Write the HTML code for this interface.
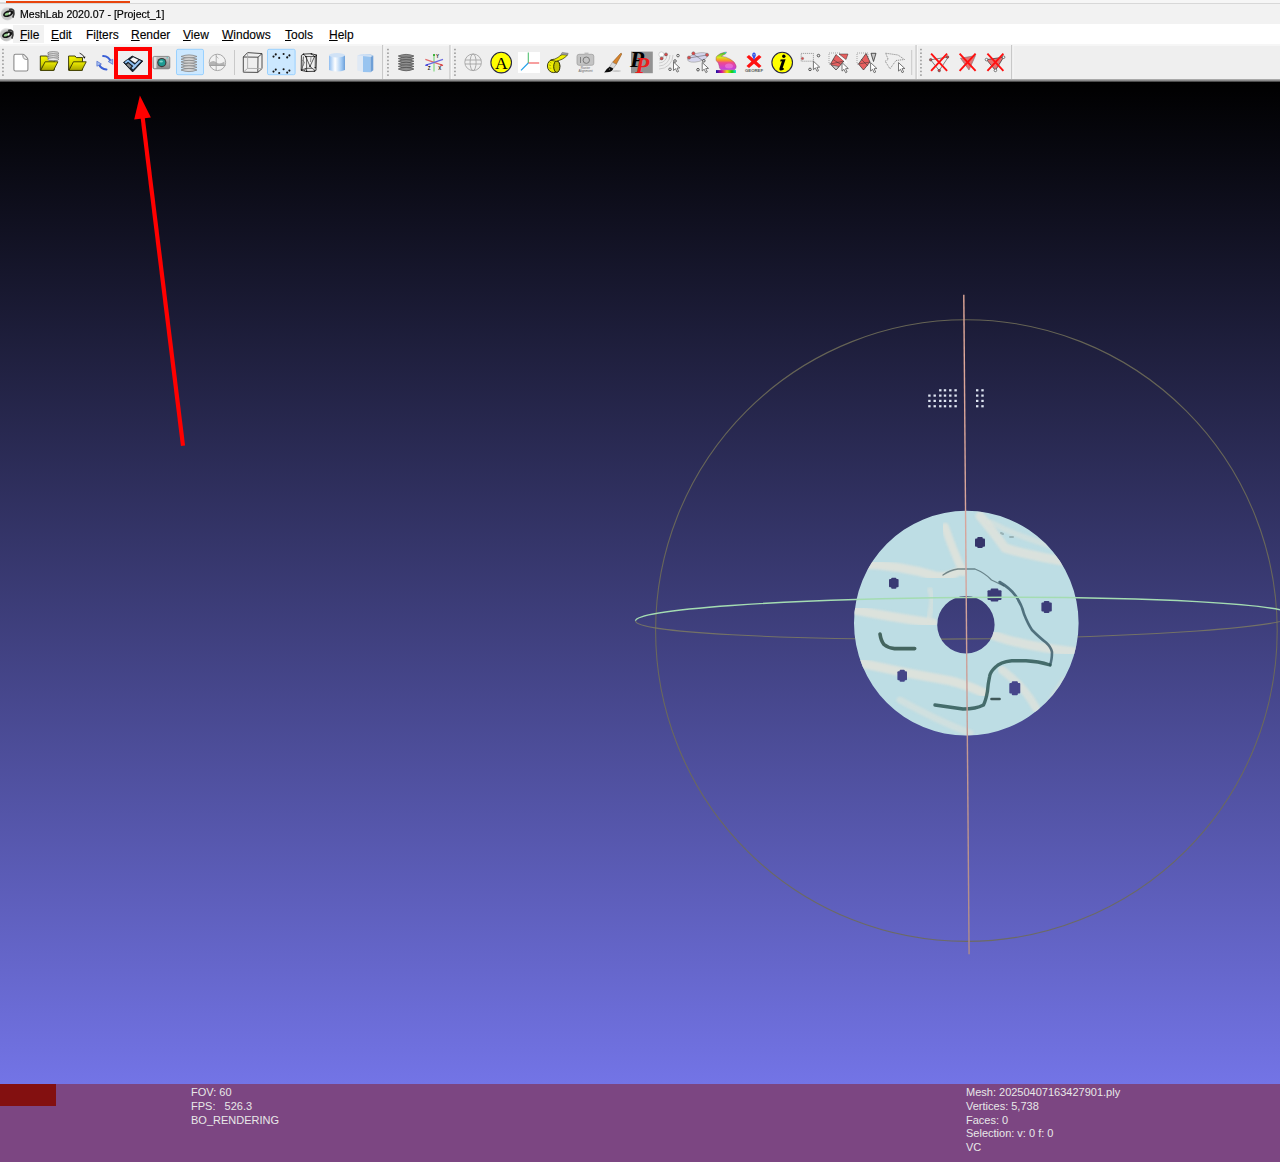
<!DOCTYPE html>
<html><head><meta charset="utf-8">
<style>
*{margin:0;padding:0;box-sizing:border-box}
html,body{width:1280px;height:1162px;overflow:hidden;background:#f0f0f0;font-family:"Liberation Sans",sans-serif}
#title{position:absolute;left:0;top:0;width:1280px;height:24px;background:linear-gradient(#f6f6f6 0,#f6f6f6 3px,#f2f2f2 4px,#f2f2f2 100%)}
#prog{position:absolute;left:6px;top:1px;width:124px;height:3px;background:#e8440c}
#topline{position:absolute;left:0;top:3px;width:1280px;height:1px;background:#d8d8d8}
#ttext{position:absolute;left:19.5px;top:7.7px;font-size:11px;color:#000;-webkit-text-stroke:0.2px #000;white-space:nowrap;transform-origin:0 0;transform:scaleX(0.96)}
#menu{position:absolute;left:0;top:24px;width:1280px;height:20px;background:#fff}
.mi{position:absolute;top:3px;font-size:12px;color:#000;white-space:nowrap;-webkit-text-stroke:0.12px #000}
.mi u{text-decoration:underline}
#filehl{position:absolute;left:13px;top:25px;width:31px;height:18px;background:#f2f2f2}
#tb{position:absolute;left:0;top:44px;width:1280px;height:36px;background:linear-gradient(#f6f6f6 0,#f6f6f6 2px,#efefef 2.5px,#efefef 100%)}
#view{position:absolute;left:0;top:82px;width:1280px;height:1080px;background:linear-gradient(to bottom,#000 0px,rgb(115,116,230) 1002px,rgb(115,116,230) 1080px)}
#shadow{position:absolute;left:0;top:79px;width:1280px;height:3px;background:linear-gradient(#b4b4b4,#9a9a9a 40%,#303030)}
#bar{position:absolute;left:0;top:1084px;width:1280px;height:78px;background:#7c4682}
#redbox{position:absolute;left:0;top:1084px;width:56px;height:22px;background:#831010}
.info{position:absolute;font-size:11px;line-height:13.6px;color:#e8e8e8;white-space:pre;margin-top:-0.6px}
svg{position:absolute;left:0;top:0}
</style></head><body>
<div id="title"></div>
<div id="prog"></div><div style="position:absolute;left:0;top:1.5px;width:6px;height:2px;background:#dcdcdc"></div>
<div id="topline"></div>
<svg width="0" height="0" style="position:absolute"><defs><radialGradient id="eyeg" cx="0.45" cy="0.55" r="0.55"><stop offset="0" stop-color="#b0b0b0"/><stop offset="0.7" stop-color="#c8c8c8"/><stop offset="1" stop-color="#dedede" stop-opacity="0.3"/></radialGradient></defs></svg><svg width="18" height="18" style="position:absolute;left:0.3px;top:5.2px">
<ellipse cx="7.6" cy="8.6" rx="6.9" ry="6.9" fill="url(#eyeg)"/>
<path d="M9,4.6 Q12,3.2 13.6,5.5 Q14.6,8.5 12.8,12.6" fill="none" stroke="#3a3a3a" stroke-width="1.7"/>
<ellipse cx="8.2" cy="8.6" rx="5.3" ry="3" transform="rotate(-20 8.2 8.6)" fill="#111"/>
<ellipse cx="7.2" cy="9" rx="2.6" ry="1.3" transform="rotate(-20 7.2 9)" fill="#9ad292"/>
<ellipse cx="9.7" cy="8.2" rx="0.9" ry="1.4" transform="rotate(30 9.7 8.2)" fill="#f4f4f4"/>
</svg><div id="ttext">MeshLab 2020.07 - [Project_1]</div>
<div id="menu"></div>
<div id="filehl"></div>
<svg width="18" height="18" style="position:absolute;left:-1.2px;top:26.2px">
<ellipse cx="7.6" cy="8.6" rx="6.9" ry="6.9" fill="url(#eyeg)"/>
<path d="M9,4.6 Q12,3.2 13.6,5.5 Q14.6,8.5 12.8,12.6" fill="none" stroke="#3a3a3a" stroke-width="1.7"/>
<ellipse cx="8.2" cy="8.6" rx="5.3" ry="3" transform="rotate(-20 8.2 8.6)" fill="#111"/>
<ellipse cx="7.2" cy="9" rx="2.6" ry="1.3" transform="rotate(-20 7.2 9)" fill="#9ad292"/>
<ellipse cx="9.7" cy="8.2" rx="0.9" ry="1.4" transform="rotate(30 9.7 8.2)" fill="#f4f4f4"/>
</svg><div class="mi" style="left:20px;top:28px"><u>F</u>ile</div>
<div class="mi" style="left:51px;top:28px"><u>E</u>dit</div>
<div class="mi" style="left:86px;top:28px">Fi<u>l</u>ters</div>
<div class="mi" style="left:131px;top:28px"><u>R</u>ender</div>
<div class="mi" style="left:183px;top:28px"><u>V</u>iew</div>
<div class="mi" style="left:222px;top:28px"><u>W</u>indows</div>
<div class="mi" style="left:285px;top:28px"><u>T</u>ools</div>
<div class="mi" style="left:329px;top:28px"><u>H</u>elp</div>
<div id="tb"></div>
<svg id="tbsvg" width="1280" height="82" style="position:absolute;left:0;top:0"><rect x="2.1" y="48.8" width="1.7" height="1.5" fill="#9c9c9c"/><rect x="2.1" y="52.449999999999996" width="1.7" height="1.5" fill="#9c9c9c"/><rect x="2.1" y="56.099999999999994" width="1.7" height="1.5" fill="#9c9c9c"/><rect x="2.1" y="59.75" width="1.7" height="1.5" fill="#9c9c9c"/><rect x="2.1" y="63.39999999999999" width="1.7" height="1.5" fill="#9c9c9c"/><rect x="2.1" y="67.05" width="1.7" height="1.5" fill="#9c9c9c"/><rect x="2.1" y="70.7" width="1.7" height="1.5" fill="#9c9c9c"/><rect x="2.1" y="74.35" width="1.7" height="1.5" fill="#9c9c9c"/><path d="M15.5,54.3 h6.9 q1.5,0 2.6,1.2 l1.9,2.1 q1,1.1 1,2.4 v9.4 q0,1.6 -1.6,1.6 h-10.8 q-1.6,0 -1.6,-1.6 v-13.5 q0,-1.6 1.6,-1.6 Z" fill="#fff" stroke="#8a8a8a" stroke-width="1.1"/><path d="M22.6,54.6 q0.4,3.6 1.6,4.3 q1.2,0.7 3.5,0.6" fill="#e8e8e8" stroke="#8a8a8a" stroke-width="0.9"/><defs><linearGradient id="fback" x1="0" y1="0" x2="0.3" y2="1"><stop offset="0" stop-color="#ffff00"/><stop offset="0.6" stop-color="#d0d000"/><stop offset="1" stop-color="#404000"/></linearGradient><linearGradient id="ffront" x1="0" y1="0" x2="0" y2="1"><stop offset="0" stop-color="#f0f000"/><stop offset="1" stop-color="#a8a400"/></linearGradient></defs><path d="M40.3,56 h6.5 l1.2,1.6 h6.2 v12.6 h-13.9 Z" fill="url(#fback)" stroke="#2a2a00" stroke-width="0.9"/><path d="M40.699999999999996,70.4 l4.4,-8.6 h12.8 l-4.4,8.6 Z" fill="url(#ffront)" stroke="#3a3a00" stroke-width="0.9" stroke-linejoin="round"/><ellipse cx="53.2" cy="53.2" rx="5.6" ry="1.5" fill="#eaeaea" stroke="#6e6e6e" stroke-width="0.8"/><ellipse cx="53.2" cy="55.2" rx="5.6" ry="1.5" fill="#eaeaea" stroke="#6e6e6e" stroke-width="0.8"/><ellipse cx="53.2" cy="57.2" rx="5.6" ry="1.5" fill="#eaeaea" stroke="#6e6e6e" stroke-width="0.8"/><ellipse cx="53.2" cy="59.2" rx="5.6" ry="1.5" fill="#eaeaea" stroke="#6e6e6e" stroke-width="0.8"/><path d="M68.6,56 h6.5 l1.2,1.6 h6.2 v12.6 h-13.9 Z" fill="url(#fback)" stroke="#2a2a00" stroke-width="0.9"/><path d="M69.0,70.4 l4.4,-8.6 h12.8 l-4.4,8.6 Z" fill="url(#ffront)" stroke="#3a3a00" stroke-width="0.9" stroke-linejoin="round"/><path d="M79.6,53.1 q3.6,1.4 4.6,4.2" fill="none" stroke="#222" stroke-width="0.9"/><path d="M83,57 l1.8,1.8 l0.6,-2.4 Z" fill="#111"/><path d="M103.2,56 q5.5,0.2 7.6,5.6" fill="none" stroke="#3a5fd6" stroke-width="2.2" stroke-linecap="round"/><path d="M108.2,61.5 l4.5,2.8 l0,-5 Z" fill="#a9c0ee" stroke="#4a6ad0" stroke-width="0.7"/><path d="M106.4,69.5 q-5.5,-0.2 -7.6,-5.6" fill="none" stroke="#3a5fd6" stroke-width="2.2" stroke-linecap="round"/><path d="M101.4,64 l-4.5,-2.8 l0,5 Z" fill="#a9c0ee" stroke="#4a6ad0" stroke-width="0.7"/><rect x="116" y="49" width="34" height="28" fill="none" stroke="#ff0000" stroke-width="4"/><path d="M123.5,62.4 L132.2,56.1 L142.8,61.1 L132.6,71.9 Z" fill="#16202c" stroke="#101820" stroke-width="0.9" stroke-linejoin="round"/><path d="M124.47,62.17 L127.80,59.72 L129.26,60.84 L125.86,63.54 Z" fill="#8cc0f4"/><path d="M126.66,60.56 L127.97,59.60 L136.51,65.98 L135.01,67.53 Z" fill="#8cc0f4"/><path d="M131.42,67.90 L139.34,60.18 L141.24,61.12 L133.10,69.50 Z" fill="#9cc8f6"/><path d="M130.12,59.57 L133.15,57.22 L138.40,59.85 L135.12,62.97 Z" fill="#f8f8f8"/><path d="M126.50,64.68 L128.24,63.25 L131.64,66.28 L129.81,68.02 Z" fill="#8a8a8a"/><defs><linearGradient id="camb" x1="0" y1="0" x2="0" y2="1"><stop offset="0" stop-color="#c8c8c8"/><stop offset="1" stop-color="#8a8a8a"/></linearGradient></defs><rect x="153" y="56.4" width="16.8" height="12.4" rx="1.5" fill="url(#camb)" stroke="#6a6a6a" stroke-width="0.7"/><rect x="153.8" y="57.2" width="2.6" height="11" fill="#e4e4e4"/><circle cx="161.8" cy="62.6" r="4.6" fill="#3a3a3a"/><circle cx="161.8" cy="62.6" r="3.5" fill="#1d9a92"/><ellipse cx="161.2" cy="61.4" rx="1.8" ry="1" fill="#7fd6cc"/><rect x="166.5" y="57.2" width="1.6" height="1.2" fill="#5fc8c8"/><rect x="176.5" y="49.3" width="27" height="25.4" rx="1.5" fill="#cce8ff" stroke="#99d1ff" stroke-width="1"/><path d="M181,56.5 q8,-3.2 16,0 q-8,3.2 -16,0 Z" fill="#d2d2d2" stroke="#858585" stroke-width="0.8"/><path d="M181,59.2 q8,-3.2 16,0 q-8,3.2 -16,0 Z" fill="#d2d2d2" stroke="#858585" stroke-width="0.8"/><path d="M181,61.9 q8,-3.2 16,0 q-8,3.2 -16,0 Z" fill="#d2d2d2" stroke="#858585" stroke-width="0.8"/><path d="M181,64.6 q8,-3.2 16,0 q-8,3.2 -16,0 Z" fill="#d2d2d2" stroke="#858585" stroke-width="0.8"/><path d="M181,67.3 q8,-3.2 16,0 q-8,3.2 -16,0 Z" fill="#d2d2d2" stroke="#858585" stroke-width="0.8"/><path d="M181,70 q8,-3.2 16,0 q-8,3.2 -16,0 Z" fill="#d2d2d2" stroke="#858585" stroke-width="0.8"/><circle cx="217.4" cy="62.4" r="8.2" fill="#f2f2f2" stroke="#a8a8a8" stroke-width="1"/><path d="M209.5,62.5 q4,-3 7,0 q3,2.5 8,-1 v4.5 h-15 Z" fill="#b4b4b4"/><line x1="209.3" y1="65.4" x2="225.5" y2="65.4" stroke="#9a9a9a" stroke-width="0.8"/><line x1="216.2" y1="54.5" x2="216.2" y2="70.3" stroke="#a0a0a0" stroke-width="0.8"/><path d="M216,56 l2.5,2.4" stroke="#999" stroke-width="0.6"/><rect x="234" y="50" width="1" height="25" fill="#c9c9c9"/><g fill="none" stroke="#3a3a3a" stroke-width="0.9" stroke-linejoin="round"><path d="M243.3,57 L247.6,52.6 L262,53.6 L262,68.6 L257.8,72.4 L243.3,72.2 Z"/><path d="M243.3,57 L258,57.2 L262,53.6 M258,57.2 L257.8,72.4"/><path d="M247.6,52.6 L247.6,68.4 L262,68.6 M247.6,68.4 L243.3,72.2" stroke="#aaa"/></g><rect x="267.5" y="49.3" width="27.600000000000023" height="25.4" rx="1.5" fill="#cce8ff" stroke="#99d1ff" stroke-width="1"/><circle cx="273.5" cy="56.6" r="1.05" fill="#151515"/><circle cx="275.75" cy="54.4" r="1.05" fill="#151515"/><circle cx="279.2" cy="57.9" r="1.05" fill="#151515"/><circle cx="283.6" cy="54" r="1.05" fill="#151515"/><circle cx="287.2" cy="57.4" r="1.05" fill="#151515"/><circle cx="289.4" cy="55.4" r="1.05" fill="#151515"/><circle cx="273.5" cy="71.6" r="1.05" fill="#151515"/><circle cx="275.75" cy="69.6" r="1.05" fill="#151515"/><circle cx="279.2" cy="73" r="1.05" fill="#151515"/><circle cx="283.6" cy="69.2" r="1.05" fill="#151515"/><circle cx="287.2" cy="72.6" r="1.05" fill="#151515"/><circle cx="289.4" cy="70.6" r="1.05" fill="#151515"/><g fill="none" stroke="#1e1e1e" stroke-width="0.85" stroke-linejoin="round"><path d="M301.4,55.4 L303.5,54.1 L311.3,53.7 L316.5,55 L316,70.4 L314.4,71.3 L306.6,71.5 L301.2,70.4 Z"/><path d="M303.5,54.1 L305.7,56.5 L314.6,56.5 L311.3,53.7 M305.7,56.5 L310,66.3 L314.6,56.5 M306.6,56.5 L306.6,71.5 M303.4,56.5 L302.9,65 L302,69.5 M301.5,70 L306.4,68.3 L312,68.3 L314.7,70 M315.3,56 L315.2,68 M310,66.3 L312,68.3 M306,68.3 L304,71" stroke-width="0.7"/><path d="M302,60 L304.5,62 L303,66 M311,56.8 L310.5,62" stroke="#777" stroke-width="0.8"/></g><circle cx="303.5" cy="54.3" r="0.75" fill="#111"/><circle cx="311.3" cy="54" r="0.75" fill="#111"/><circle cx="316.2" cy="55.3" r="0.75" fill="#111"/><circle cx="305.7" cy="56.6" r="0.75" fill="#111"/><circle cx="314.6" cy="56.6" r="0.75" fill="#111"/><circle cx="310" cy="66.3" r="0.75" fill="#111"/><circle cx="301.6" cy="70" r="0.75" fill="#111"/><circle cx="306.6" cy="71.3" r="0.75" fill="#111"/><circle cx="314.4" cy="71" r="0.75" fill="#111"/><circle cx="315.2" cy="67.8" r="0.75" fill="#111"/><defs><linearGradient id="cyl" x1="0" x2="1"><stop offset="0" stop-color="#8fbdf0"/><stop offset="0.38" stop-color="#ffffff"/><stop offset="0.8" stop-color="#9cc6f2"/><stop offset="1" stop-color="#6c9fd8"/></linearGradient></defs><path d="M329,55.5 Q337,52 345,55.5 L345,70 Q337,73.2 329,70 Z" fill="url(#cyl)"/><ellipse cx="337" cy="55.3" rx="8" ry="2.2" fill="#d0e2f6"/><path d="M357.3,55.5 L363,54 L363,72 L357.3,70.5 Z" fill="#dfe9f5"/><path d="M363,54 L370.6,54.6 L370.6,72.3 L363,72 Z" fill="#98c4f0"/><path d="M370.6,54.6 L373.3,55.8 L373.3,70.3 L370.6,72.3 Z" fill="#6e9fd6"/><path d="M357.3,55.5 Q365,52.5 373.3,55.8 L370.6,57 Q365,56 357.3,55.5 Z" fill="#cfe0f4"/><rect x="382.1" y="45" width="1.3" height="34" fill="#c4c4c4"/><rect x="383.40000000000003" y="45" width="1" height="34" fill="#fbfbfb"/><rect x="387.1" y="48.8" width="1.7" height="1.5" fill="#9c9c9c"/><rect x="387.1" y="52.449999999999996" width="1.7" height="1.5" fill="#9c9c9c"/><rect x="387.1" y="56.099999999999994" width="1.7" height="1.5" fill="#9c9c9c"/><rect x="387.1" y="59.75" width="1.7" height="1.5" fill="#9c9c9c"/><rect x="387.1" y="63.39999999999999" width="1.7" height="1.5" fill="#9c9c9c"/><rect x="387.1" y="67.05" width="1.7" height="1.5" fill="#9c9c9c"/><rect x="387.1" y="70.7" width="1.7" height="1.5" fill="#9c9c9c"/><rect x="387.1" y="74.35" width="1.7" height="1.5" fill="#9c9c9c"/><path d="M398.3,56 q7.8,-3.2 15.6,0 q-7.8,3.5 -15.6,0 Z" fill="#8e8e8e" stroke="#505050" stroke-width="0.8"/><path d="M398.3,58.6 q7.8,-3.2 15.6,0 q-7.8,3.5 -15.6,0 Z" fill="#8e8e8e" stroke="#505050" stroke-width="0.8"/><path d="M398.3,61.2 q7.8,-3.2 15.6,0 q-7.8,3.5 -15.6,0 Z" fill="#8e8e8e" stroke="#505050" stroke-width="0.8"/><path d="M398.3,63.8 q7.8,-3.2 15.6,0 q-7.8,3.5 -15.6,0 Z" fill="#8e8e8e" stroke="#505050" stroke-width="0.8"/><path d="M398.3,66.4 q7.8,-3.2 15.6,0 q-7.8,3.5 -15.6,0 Z" fill="#8e8e8e" stroke="#505050" stroke-width="0.8"/><path d="M398.3,69 q7.8,-3.2 15.6,0 q-7.8,3.5 -15.6,0 Z" fill="#8e8e8e" stroke="#505050" stroke-width="0.8"/><line x1="434" y1="54.5" x2="434" y2="71.5" stroke="#80d880" stroke-width="1.2"/><circle cx="434" cy="55" r="1" fill="#16a016"/><line x1="425.3" y1="59.4" x2="443" y2="65.4" stroke="#e06a6a" stroke-width="1.2"/><line x1="425.3" y1="65.4" x2="443" y2="59.4" stroke="#6a6ae0" stroke-width="1.2"/><path d="M425,65.6 l2.6,-1.6 l0.4,1.8 Z" fill="#2020d0"/><path d="M443.3,65.6 l-2.6,-1.6 l-0.4,1.8 Z" fill="#d02020"/><text x="436" y="57.5" font-size="4.5" font-weight="bold" fill="#222">Y</text><text x="427.8" y="69.5" font-size="4.5" font-weight="bold" fill="#222">Z</text><text x="438.3" y="69.5" font-size="4.5" font-weight="bold" fill="#222">X</text><rect x="449.4" y="45" width="1.3" height="34" fill="#c4c4c4"/><rect x="450.7" y="45" width="1" height="34" fill="#fbfbfb"/><rect x="454.1" y="48.8" width="1.7" height="1.5" fill="#9c9c9c"/><rect x="454.1" y="52.449999999999996" width="1.7" height="1.5" fill="#9c9c9c"/><rect x="454.1" y="56.099999999999994" width="1.7" height="1.5" fill="#9c9c9c"/><rect x="454.1" y="59.75" width="1.7" height="1.5" fill="#9c9c9c"/><rect x="454.1" y="63.39999999999999" width="1.7" height="1.5" fill="#9c9c9c"/><rect x="454.1" y="67.05" width="1.7" height="1.5" fill="#9c9c9c"/><rect x="454.1" y="70.7" width="1.7" height="1.5" fill="#9c9c9c"/><rect x="454.1" y="74.35" width="1.7" height="1.5" fill="#9c9c9c"/><g fill="none" stroke="#a4a4a4" stroke-width="0.9"><circle cx="473.1" cy="62.3" r="8.3"/><ellipse cx="473.1" cy="62.3" rx="3" ry="8.3"/><path d="M465,60 H481.2 M465,64 H481.2"/></g><circle cx="501.2" cy="62.6" r="10.3" fill="#ffff00" stroke="#262640" stroke-width="1.1"/><text x="501.3" y="68.9" font-family="Liberation Serif" font-size="17.5" text-anchor="middle" fill="#000">A</text><rect x="518" y="52" width="22" height="21" fill="#fff"/><line x1="528.3" y1="52.6" x2="528.3" y2="63" stroke="#50c070" stroke-width="1.1"/><line x1="528.3" y1="63" x2="539.2" y2="63" stroke="#f05050" stroke-width="1.1"/><line x1="528.3" y1="63" x2="521" y2="70.4" stroke="#20a0e8" stroke-width="1.2"/><ellipse cx="553.6" cy="66" rx="6.2" ry="6.6" fill="#eeee00" stroke="#2a2a10" stroke-width="0.9"/><path d="M549.5,62 L551.5,63 M549,65 L551,65.6 M549.2,68 L551.3,68.4" stroke="#8a8a00" stroke-width="0.6"/><ellipse cx="556.8" cy="66.6" rx="3.1" ry="5.8" fill="#c4c400" stroke="#1a1a00" stroke-width="0.9"/><path d="M550.5,60.2 Q555.5,59.2 558,57.4 Q560,55.6 562,54.6 L567.6,54.9 Q565.2,57.6 562.2,59.2 Q559,60.6 556,61.3 Z" fill="#f0f000" stroke="#2a2a10" stroke-width="0.7"/><path d="M560.8,54.6 L562.2,52.4 L568.2,53.3 L567.6,55 Z" fill="#a0a0a0" stroke="#555" stroke-width="0.4"/><rect x="577" y="54.3" width="16.8" height="11" rx="2" fill="#c4c4c4" stroke="#9a9a9a" stroke-width="0.7"/><rect x="584.5" y="52.6" width="4" height="2" fill="#bbb"/><circle cx="586.3" cy="60.2" r="3.2" fill="none" stroke="#7a7a7a" stroke-width="1"/><rect x="580" y="57" width="0.9" height="6" fill="#7a7a7a"/><text x="585.5" y="68.8" font-size="3.2" text-anchor="middle" fill="#666">Raster</text><text x="585.5" y="72.3" font-size="3.2" text-anchor="middle" fill="#666">Alignment</text><ellipse cx="616.5" cy="71" rx="4.5" ry="0.8" fill="#bdbdbd"/><path d="M612.5,62.3 L620.4,53.6 Q621.6,52.8 621.8,54 L616.2,64.4 Z" fill="#d8842c" stroke="#7a4a14" stroke-width="0.5"/><path d="M612.4,62.3 L616.3,64.4 L613.2,68.6 L609.6,66.8 Z" fill="#dcdcdc" stroke="#8a8a8a" stroke-width="0.5"/><path d="M609.6,66.8 L613.2,68.6 Q612.6,71.4 609.2,71.9 L604.2,72.4 Q606,69 609.6,66.8 Z" fill="#0a0a0a"/><circle cx="609.5" cy="69.2" r="0.6" fill="#777"/><rect x="631" y="51.6" width="21.8" height="21.6" fill="#929292"/><text x="630" y="67" font-family="Liberation Serif" font-style="italic" font-weight="bold" font-size="23" fill="#000">P</text><text x="635.2" y="73" font-family="Liberation Serif" font-style="italic" font-weight="bold" font-size="23" fill="#ee1c1c">P</text><g fill="none" stroke="#c8c8c8" stroke-width="0.9"><path d="M659,63 a8,8 0 0,0 8,-8"/><path d="M659,66 a11,11 0 0,0 11,-11"/><path d="M659,69 a14,14 0 0,0 14,-14"/><path d="M659,60 a5,5 0 0,0 5,-5"/></g><circle cx="661.4" cy="54.5" r="2.6" fill="#fff" stroke="#bbb" stroke-width="0.6"/><circle cx="666" cy="54.4" r="1.5" fill="#e04848" stroke="#555" stroke-width="0.5"/><circle cx="661.6" cy="58.4" r="1.5" fill="#e04848" stroke="#555" stroke-width="0.5"/><circle cx="678" cy="55.6" r="1.3" fill="none" stroke="#555" stroke-width="0.9"/><circle cx="675" cy="61" r="1.3" fill="none" stroke="#555" stroke-width="0.9"/><circle cx="670" cy="69.3" r="1.3" fill="none" stroke="#555" stroke-width="0.9"/><path d="M673.5,62 l0,8.5 l2,-1.8 l1.6,3.4 l1.5,-0.7 l-1.6,-3.3 l2.8,-0.2 Z" fill="#fff" stroke="#555" stroke-width="0.8" stroke-linejoin="round"/><ellipse cx="697.8" cy="57.4" rx="10.5" ry="4.2" transform="rotate(-14 697.8 57.4)" fill="#d4d4ec" stroke="#aaa" stroke-width="0.7"/><path d="M689,58 L707,55 M693,54 L702,60" stroke="#555" stroke-width="0.5"/><circle cx="689" cy="57.6" r="1.6" fill="#e04848" stroke="#666" stroke-width="0.5"/><circle cx="693.4" cy="53.4" r="1.6" fill="#e04848" stroke="#666" stroke-width="0.5"/><circle cx="707" cy="54.8" r="1.6" fill="#e04848" stroke="#666" stroke-width="0.5"/><circle cx="703.8" cy="60.8" r="1.3" fill="none" stroke="#444" stroke-width="0.9"/><circle cx="698" cy="69.7" r="1.3" fill="none" stroke="#444" stroke-width="0.9"/><path d="M702.2,62.5 l0,8.5 l2,-1.8 l1.6,3.4 l1.5,-0.7 l-1.6,-3.3 l2.8,-0.2 Z" fill="#fff" stroke="#555" stroke-width="0.8" stroke-linejoin="round"/><defs><linearGradient id="rb" x1="0" x2="1"><stop offset="0" stop-color="#1010a0"/><stop offset="0.3" stop-color="#e010a0"/><stop offset="0.55" stop-color="#f0e000"/><stop offset="0.8" stop-color="#10d010"/><stop offset="1" stop-color="#10e0e0"/></linearGradient><linearGradient id="bb" x1="0" y1="0" x2="0" y2="1"><stop offset="0" stop-color="#20c030"/><stop offset="0.3" stop-color="#d8e820"/><stop offset="0.45" stop-color="#f8a020"/><stop offset="0.6" stop-color="#f04890"/><stop offset="1" stop-color="#c040e8"/></linearGradient></defs><rect x="716" y="70.1" width="20" height="2.9" fill="url(#rb)"/><path d="M716,59.5 Q715.5,56.5 717.5,55.5 L720.5,53.5 Q724,52.2 726.5,52 L725.5,54 Q723,55 721.5,56.4 Q726,56.5 730,59 Q735,61.5 736.2,66 Q736.5,68.5 734.5,69.8 L721,69.8 Q719,68.5 719.2,66 Q718.5,63 717.5,62 Q716,61 716,59.5 Z" fill="url(#bb)" stroke="#8a3060" stroke-width="0.35"/><ellipse cx="729" cy="66" rx="4" ry="2.5" fill="#f080e0" opacity="0.6"/><path d="M724,52.8 L726.5,52 L725.6,53.8 Z" fill="#30e0e0"/><path d="M746.5,57 L749,55 L754,59.2 L759,55 L761.5,57 L756.6,61.6 L761.5,66 L759,68 L754,63.8 L749,68 L746.5,66 L751.4,61.6 Z" fill="#ff1010"/><path d="M754,60.5 L752.2,55.6 Q752.2,52.6 754,52.6 Q755.8,52.6 755.8,55.6 Z" fill="#3050f0"/><circle cx="754" cy="54.8" r="0.8" fill="#9ab"/><text x="754" y="72.3" font-size="4.3" font-weight="bold" text-anchor="middle" fill="#5a5a5a">GEOREF</text><circle cx="782.2" cy="62.6" r="10.3" fill="#ffff00" stroke="#262640" stroke-width="1.1"/><circle cx="783.8" cy="56.3" r="1.7" fill="#000"/><path d="M780.6,59.6 L785.6,59.2 L782.8,67.6 Q782.6,68.6 783.8,68.2 L784.2,69.2 Q781.2,71 779.8,70.2 Q779,69.6 779.6,68 L781.9,61.2 L780.2,61.4 Z" fill="#000"/><rect x="801.2" y="53.4" width="12.2" height="7.8" fill="none" stroke="#777" stroke-width="0.8" stroke-dasharray="1,1"/><circle cx="802.5" cy="58.5" r="1.2" fill="#e04848" stroke="#777" stroke-width="0.4"/><circle cx="818.5" cy="55.6" r="1.3" fill="none" stroke="#444" stroke-width="0.9"/><circle cx="810" cy="69.4" r="1.3" fill="none" stroke="#444" stroke-width="0.9"/><path d="M813.4,61.2 l0,8.5 l2,-1.8 l1.6,3.4 l1.5,-0.7 l-1.6,-3.3 l2.8,-0.2 Z" fill="#fff" stroke="#555" stroke-width="0.8" stroke-linejoin="round"/><rect x="829" y="53" width="11" height="11" fill="none" stroke="#888" stroke-width="0.7" stroke-dasharray="1,1"/><path d="M830.5,64 L836,54.5 L844,61 L836,70 Z" fill="#e86060" stroke="#333" stroke-width="0.7"/><path d="M830.5,64 L844,61 M833,59.5 L841,64.5" stroke="#333" stroke-width="0.5"/><path d="M831.5,65 L836,70 L839,66.5 Z" fill="#c8c8c8" stroke="#333" stroke-width="0.5"/><path d="M839,54 L848,54 L846,59.5 Z" fill="#e86060" stroke="#333" stroke-width="0.5"/><path d="M837,54 L847,63" stroke="#fff" stroke-width="1.2"/><path d="M842,62.6 l0,8.5 l2,-1.8 l1.6,3.4 l1.5,-0.7 l-1.6,-3.3 l2.8,-0.2 Z" fill="#fff" stroke="#555" stroke-width="0.8" stroke-linejoin="round"/><rect x="857" y="53" width="11" height="11" fill="none" stroke="#888" stroke-width="0.7" stroke-dasharray="1,1"/><path d="M858.5,64 L866,53.5 L870,62 L863.5,70 Z" fill="#e86060" stroke="#333" stroke-width="0.7"/><path d="M858.5,64 L870,62 M861,59 L868,66" stroke="#333" stroke-width="0.5"/><path d="M871,53.3 L876,53.3 L873.5,61.5 Z" fill="#c8c8c8" stroke="#333" stroke-width="0.8"/><path d="M870.6,62.6 l0,8.5 l2,-1.8 l1.6,3.4 l1.5,-0.7 l-1.6,-3.3 l2.8,-0.2 Z" fill="#fff" stroke="#555" stroke-width="0.8" stroke-linejoin="round"/><path d="M885.6,53.2 L898,55 L904.5,59.5 L896,60.5 L890,68.8 L885.2,61.2 L888.2,59.4 Z" fill="none" stroke="#777" stroke-width="0.8" stroke-dasharray="1.2,0.8" stroke-linejoin="round"/><path d="M898.5,62.6 l0,8.5 l2,-1.8 l1.6,3.4 l1.5,-0.7 l-1.6,-3.3 l2.8,-0.2 Z" fill="#fff" stroke="#555" stroke-width="0.8" stroke-linejoin="round"/><rect x="911.2" y="50" width="1" height="25" fill="#c9c9c9"/><rect x="915.5" y="45" width="1.3" height="34" fill="#c4c4c4"/><rect x="916.8" y="45" width="1" height="34" fill="#fbfbfb"/><rect x="920.1" y="48.8" width="1.7" height="1.5" fill="#9c9c9c"/><rect x="920.1" y="52.449999999999996" width="1.7" height="1.5" fill="#9c9c9c"/><rect x="920.1" y="56.099999999999994" width="1.7" height="1.5" fill="#9c9c9c"/><rect x="920.1" y="59.75" width="1.7" height="1.5" fill="#9c9c9c"/><rect x="920.1" y="63.39999999999999" width="1.7" height="1.5" fill="#9c9c9c"/><rect x="920.1" y="67.05" width="1.7" height="1.5" fill="#9c9c9c"/><rect x="920.1" y="70.7" width="1.7" height="1.5" fill="#9c9c9c"/><rect x="920.1" y="74.35" width="1.7" height="1.5" fill="#9c9c9c"/><path d="M930.7,59.8 L948.3,57 L939.2,70.6 Z" fill="none" stroke="#666" stroke-width="0.8"/><circle cx="930.7" cy="59.8" r="1.3" fill="#d04040" stroke="#444" stroke-width="0.5"/><circle cx="947.5" cy="57" r="1.3" fill="#d04040" stroke="#444" stroke-width="0.5"/><circle cx="939.2" cy="70.6" r="1.3" fill="#d04040" stroke="#444" stroke-width="0.5"/><path d="M931.1,53.6 L947.1,70.8 M947.1,53.6 L931.1,70.8" stroke="#ff1010" stroke-width="1.9"/><path d="M960.5,58.2 L975.5,55.6 L969,70 Z" fill="#e87070" stroke="#777" stroke-width="0.6"/><path d="M959.6,53.6 L975.6,70.8 M975.6,53.6 L959.6,70.8" stroke="#ff1010" stroke-width="1.9"/><path d="M986.5,59.6 L1003.6,57.2 L995.4,70.4 Z" fill="#e87070" stroke="#444" stroke-width="0.8"/><circle cx="986.5" cy="59.6" r="1.3" fill="#fff" stroke="#444" stroke-width="0.7"/><circle cx="1003.6" cy="57.2" r="1.3" fill="#fff" stroke="#444" stroke-width="0.7"/><circle cx="995.4" cy="70.4" r="1.3" fill="#fff" stroke="#444" stroke-width="0.7"/><path d="M987.4,53.6 L1003.4,70.8 M1003.4,53.6 L987.4,70.8" stroke="#ff1010" stroke-width="1.9"/><rect x="1011.1" y="45" width="1.3" height="34" fill="#c4c4c4"/><rect x="1012.4" y="45" width="1" height="34" fill="#fbfbfb"/></svg>
<div id="view"></div>
<div id="shadow"></div>
<svg id="scene" width="1280" height="1162" style="position:absolute;left:0;top:0"><defs><clipPath id="topclip"><rect x="0" y="0" width="1280" height="618"/></clipPath><clipPath id="botclip"><rect x="0" y="618" width="1280" height="600"/></clipPath><clipPath id="discclip"><path shape-rendering="crispEdges" clip-rule="evenodd" d="M854,623.2a112.3,112.3 0 1,0 224.6,0a112.3,112.3 0 1,0 -224.6,0Z M937.2,624.8a28.7,28.7 0 1,0 57.4,0a28.7,28.7 0 1,0 -57.4,0Z"/></clipPath><filter id="bl"><feGaussianBlur stdDeviation="1.2"/></filter></defs><circle cx="966.4" cy="630.6" r="310.8" fill="none" stroke="#6e6c58" stroke-opacity="0.9" stroke-width="1.1"/><ellipse cx="964.5" cy="618.2" rx="329" ry="20.7" transform="rotate(-0.47 964.5 618.2)" fill="none" stroke="#7c7a62" stroke-opacity="0.85" stroke-width="1.1" clip-path="url(#botclip)"/><rect x="939.0999999999999" y="389.2" width="2.4" height="2.2" fill="#dfe6f2"/><rect x="943.8" y="389.2" width="2.4" height="2.2" fill="#dfe6f2"/><rect x="949.0999999999999" y="389.2" width="2.4" height="2.2" fill="#dfe6f2"/><rect x="954.4" y="389.2" width="2.4" height="2.2" fill="#dfe6f2"/><rect x="976.0" y="389.2" width="2.4" height="2.2" fill="#dfe6f2"/><rect x="981.3" y="389.2" width="2.4" height="2.2" fill="#dfe6f2"/><rect x="928.1999999999999" y="394.5" width="2.4" height="2.2" fill="#dfe6f2"/><rect x="933.5" y="394.5" width="2.4" height="2.2" fill="#dfe6f2"/><rect x="939.0999999999999" y="394.5" width="2.4" height="2.2" fill="#dfe6f2"/><rect x="943.8" y="394.5" width="2.4" height="2.2" fill="#dfe6f2"/><rect x="949.0999999999999" y="394.5" width="2.4" height="2.2" fill="#dfe6f2"/><rect x="954.4" y="394.5" width="2.4" height="2.2" fill="#dfe6f2"/><rect x="976.0" y="394.5" width="2.4" height="2.2" fill="#dfe6f2"/><rect x="981.3" y="394.5" width="2.4" height="2.2" fill="#dfe6f2"/><rect x="928.1999999999999" y="399.79999999999995" width="2.4" height="2.2" fill="#dfe6f2"/><rect x="933.5" y="399.79999999999995" width="2.4" height="2.2" fill="#dfe6f2"/><rect x="939.0999999999999" y="399.79999999999995" width="2.4" height="2.2" fill="#dfe6f2"/><rect x="943.8" y="399.79999999999995" width="2.4" height="2.2" fill="#dfe6f2"/><rect x="949.0999999999999" y="399.79999999999995" width="2.4" height="2.2" fill="#dfe6f2"/><rect x="954.4" y="399.79999999999995" width="2.4" height="2.2" fill="#dfe6f2"/><rect x="976.0" y="399.79999999999995" width="2.4" height="2.2" fill="#dfe6f2"/><rect x="981.3" y="399.79999999999995" width="2.4" height="2.2" fill="#dfe6f2"/><rect x="928.1999999999999" y="405.15" width="2.4" height="2.2" fill="#dfe6f2"/><rect x="933.5" y="405.15" width="2.4" height="2.2" fill="#dfe6f2"/><rect x="939.0999999999999" y="405.15" width="2.4" height="2.2" fill="#dfe6f2"/><rect x="943.8" y="405.15" width="2.4" height="2.2" fill="#dfe6f2"/><rect x="949.0999999999999" y="405.15" width="2.4" height="2.2" fill="#dfe6f2"/><rect x="954.4" y="405.15" width="2.4" height="2.2" fill="#dfe6f2"/><rect x="976.0" y="405.15" width="2.4" height="2.2" fill="#dfe6f2"/><rect x="981.3" y="405.15" width="2.4" height="2.2" fill="#dfe6f2"/><g clip-path="url(#discclip)"><rect x="850" y="505" width="235" height="235" fill="#bddde4"/><path d="M945,527 Q952,548 963,572" fill="none" stroke="#dde2dc" stroke-width="8.049999999999999" stroke-linecap="round" opacity="0.96" filter="url(#bl)"/><path d="M980,516 Q992,530 1005,548 Q1030,556 1076,563" fill="none" stroke="#dde2dc" stroke-width="9.2" stroke-linecap="round" opacity="0.8999999999999999" filter="url(#bl)"/><path d="M990,522 Q1020,538 1060,548" fill="none" stroke="#dde2dc" stroke-width="5.75" stroke-linecap="round" opacity="0.6" filter="url(#bl)"/><path d="M858,564 Q900,565 935,576 Q948,578 957,572" fill="none" stroke="#dde2dc" stroke-width="9.2" stroke-linecap="round" opacity="0.96" filter="url(#bl)"/><path d="M855,610 Q890,617 933,623" fill="none" stroke="#dde2dc" stroke-width="9.2" stroke-linecap="round" opacity="0.96" filter="url(#bl)"/><path d="M860,663 Q905,673 951,681 Q970,686 984,693" fill="none" stroke="#dde2dc" stroke-width="9.2" stroke-linecap="round" opacity="0.96" filter="url(#bl)"/><path d="M990,634 Q1020,646 1076,652" fill="none" stroke="#dde2dc" stroke-width="9.2" stroke-linecap="round" opacity="0.8999999999999999" filter="url(#bl)"/><path d="M1002,670 Q1024,686 1036,708" fill="none" stroke="#dde2dc" stroke-width="8.049999999999999" stroke-linecap="round" opacity="0.84" filter="url(#bl)"/><path d="M930,590 Q935,600 928,620" fill="none" stroke="#dde2dc" stroke-width="5.75" stroke-linecap="round" opacity="0.6" filter="url(#bl)"/><path d="M900,700 Q940,722 970,733" fill="none" stroke="#dde2dc" stroke-width="6.8999999999999995" stroke-linecap="round" opacity="0.6" filter="url(#bl)"/><path d="M1040,720 Q1050,700 1064,680" fill="none" stroke="#dde2dc" stroke-width="5.75" stroke-linecap="round" opacity="0.48" filter="url(#bl)"/><path d="M943,575 Q950,570 958,569 L975,569 Q985,573 991.5,580 Q998,583 1003.7,586" fill="none" stroke="#304a50" stroke-width="1.3" stroke-linecap="round" stroke-linejoin="round" opacity="0.6"/><path d="M999.6,582 Q1010,588 1015.8,596 Q1022,605 1024,614 Q1028,624 1032,630 Q1040,638 1046,642.5 Q1051,647 1052,652 Q1052,660 1050,665" fill="none" stroke="#2c4c5c" stroke-width="2.6" stroke-linecap="round" stroke-linejoin="round" opacity="0.75"/><path d="M1050,665 Q1038,661 1026,660.7 L1011.8,660.7 Q1000,662 995.6,667 Q990,672 989.5,677 Q988,684 987.5,691 Q986,700 983.5,705 Q976,709 963,709 L935,705" fill="none" stroke="#2f5856" stroke-width="3.4" stroke-linecap="round" stroke-linejoin="round" opacity="0.85"/><path d="M880,634 Q881,641 884,644.5 Q888,648 894.5,648.6 L914.7,648.6" fill="none" stroke="#2f5048" stroke-width="3.6" stroke-linecap="round" stroke-linejoin="round" opacity="0.85"/><path d="M991.5,699 L999.6,699" fill="none" stroke="#2a4040" stroke-width="2.6" stroke-linecap="round" stroke-linejoin="round" opacity="0.85"/><path d="M1001,533 L1003,534 M1010,537 L1013,537" fill="none" stroke="#506060" stroke-width="2" stroke-linecap="round" stroke-linejoin="round" opacity="0.35"/></g><rect x="975" y="538.375" width="10" height="8.25" rx="1" fill="rgb(53,53,106)"/><rect x="977.25" y="537.0" width="5.5" height="11.0" rx="1" fill="rgb(53,53,106)"/><rect x="889.0" y="579.075" width="9.6" height="8.25" rx="1" fill="rgb(58,58,115)"/><rect x="891.16" y="577.7" width="5.28" height="11.0" rx="1" fill="rgb(58,58,115)"/><rect x="987.5" y="590.125" width="14" height="9.75" rx="1" fill="rgb(59,59,118)"/><rect x="990.65" y="588.5" width="7.700000000000001" height="13.0" rx="1" fill="rgb(59,59,118)"/><rect x="1041.3999999999999" y="602.5" width="10.4" height="9.0" rx="1" fill="rgb(60,61,121)"/><rect x="1043.74" y="601" width="5.720000000000001" height="12" rx="1" fill="rgb(60,61,121)"/><rect x="897.4000000000001" y="671.3" width="9.6" height="9.0" rx="1" fill="rgb(68,69,136)"/><rect x="899.5600000000001" y="669.8" width="5.28" height="12" rx="1" fill="rgb(68,69,136)"/><rect x="1009.3" y="682.95" width="11.0" height="10.5" rx="1" fill="rgb(70,70,139)"/><rect x="1011.775" y="681.2" width="6.050000000000001" height="14" rx="1" fill="rgb(70,70,139)"/><ellipse cx="964.5" cy="618.2" rx="329" ry="20.7" transform="rotate(-0.47 964.5 618.2)" fill="none" stroke="#a4dcb2" stroke-width="1.4" clip-path="url(#topclip)"/><defs><linearGradient id="vl" x1="0" y1="0" x2="0" y2="1"><stop offset="0" stop-color="#e0a898"/><stop offset="0.45" stop-color="#d4a49c"/><stop offset="1" stop-color="#b08c88"/></linearGradient></defs><path d="M963.8,294.7 L969.1,954.3" stroke="url(#vl)" stroke-width="1.4"/><line x1="142.6" y1="117" x2="183" y2="445.7" stroke="#ff0000" stroke-width="4.2"/><path d="M139.9,95.5 L150.9,117.4 L134.2,119.6 Z" fill="#ff0000"/></svg>
<div id="bar"></div>
<div id="redbox"></div>
<div class="info" style="left:191px;top:1087px">FOV: 60
FPS:   526.3
BO_RENDERING</div>
<div class="info" style="left:966px;top:1087px">Mesh: 20250407163427901.ply
Vertices: 5,738
Faces: 0
Selection: v: 0 f: 0
VC</div>
</body></html>
